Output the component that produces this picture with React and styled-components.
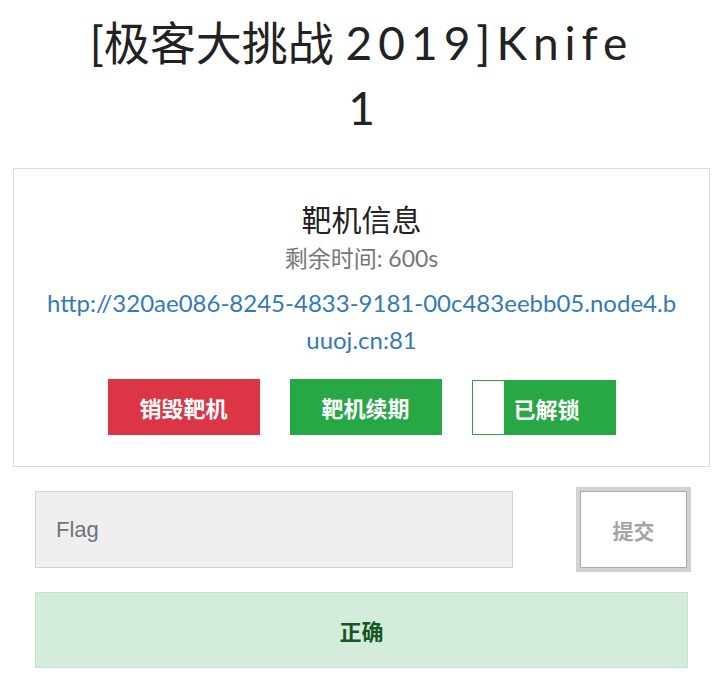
import React from 'react'
import styled, { createGlobalStyle } from 'styled-components'

const Global = createGlobalStyle`
  body {
    margin: 0;
    background: #fff;
    font-family: Lato, "Noto Sans CJK SC", sans-serif;
  }
`

const Page = styled.div`
  width: 724px;
  padding: 0 14px 0 13px;
  box-sizing: border-box;
`

const Title = styled.h1`
  margin: 10px auto 0;
  width: 556px;
  font-family: Lato, "Noto Sans CJK SC", sans-serif;
  font-weight: 400;
  font-size: 46px;
  line-height: 65px;
  color: #222;
  text-align: center;
`

const Latin = styled.span`
  letter-spacing: 6px;
`

const Card = styled.div`
  margin-top: 28px;
  border: 1px solid #ddd;
  padding: 28px 30px 31px;
  display: flex;
  flex-direction: column;
  align-items: center;
  text-align: center;
`

const CardHeading = styled.div`
  font-size: 30px;
  line-height: 44px;
  color: #222;
`

const Remaining = styled.div`
  font-size: 23px;
  line-height: 34px;
  color: #777;
`

const Link = styled.a`
  margin-top: 9px;
  font-size: 24px;
  line-height: 37px;
  color: #337ab7;
  text-decoration: none;
  word-break: break-all;
  width: 634px;
`

const Actions = styled.div`
  display: flex;
  gap: 30px;
  margin-top: 21px;
`

const ActionButton = styled.button`
  width: 152px;
  height: 56px;
  border: none;
  background: ${p => p.$bg};
  color: #fff;
  font-family: "Noto Sans CJK SC", sans-serif;
  font-weight: 700;
  font-size: 22px;
  padding: 0;
  display: flex;
  align-items: center;
  justify-content: center;
`

const Toggle = styled.div`
  width: 144px;
  height: 55px;
  margin-top: 1px;
  box-sizing: border-box;
  border: 1px solid #28a745;
  background: #28a745;
  display: flex;
`

const Knob = styled.span`
  width: 31px;
  background: #fff;
`

const ToggleLabel = styled.span`
  flex: 1;
  display: flex;
  align-items: center;
  padding-left: 10px;
  color: #fff;
  font-family: "Noto Sans CJK SC", sans-serif;
  font-weight: 700;
  font-size: 22px;
`

const FlagRow = styled.div`
  display: flex;
  align-items: center;
  margin: 24px 0 0 22px;
`

const FlagInput = styled.input`
  width: 478px;
  height: 77px;
  box-sizing: border-box;
  background: #efefef;
  border: 1px solid #cfd2d6;
  padding: 0 20px;
  font-family: "Liberation Sans", Arial, sans-serif;
  font-size: 22px;
  color: #333;
  outline: none;
  &::placeholder { color: #6c757d; }
`

const Submit = styled.button`
  margin-left: 67px;
  width: 107px;
  height: 77px;
  box-sizing: border-box;
  background: #fff;
  border: 1px solid #a9abae;
  box-shadow: 0 0 0 4px #d0d3d6;
  color: #a5a5a5;
  font-family: "Noto Sans CJK SC", sans-serif;
  font-weight: 700;
  font-size: 21px;
`

const Result = styled.div`
  margin: 24px 22px 0 22px;
  height: 76px;
  box-sizing: border-box;
  background: #d4edda;
  border: 1px solid #c3e6cb;
  color: #155724;
  font-family: "Noto Sans CJK SC", sans-serif;
  font-weight: 700;
  font-size: 22px;
  display: flex;
  align-items: center;
  justify-content: center;
`

export default function App() {
  return (
    <Page>
      <Global />
      <Title>[极客大挑战 <Latin>2019]Knife</Latin> 1</Title>
      <Card>
        <CardHeading>靶机信息</CardHeading>
        <Remaining>剩余时间: 600s</Remaining>
        <Link href="#">http://320ae086-8245-4833-9181-00c483eebb05.node4.buuoj.cn:81</Link>
        <Actions>
          <ActionButton $bg="#dc3545">销毁靶机</ActionButton>
          <ActionButton $bg="#28a745">靶机续期</ActionButton>
          <Toggle>
            <Knob />
            <ToggleLabel>已解锁</ToggleLabel>
          </Toggle>
        </Actions>
      </Card>
      <FlagRow>
        <FlagInput placeholder="Flag" />
        <Submit>提交</Submit>
      </FlagRow>
      <Result>正确</Result>
    </Page>
  )
}
